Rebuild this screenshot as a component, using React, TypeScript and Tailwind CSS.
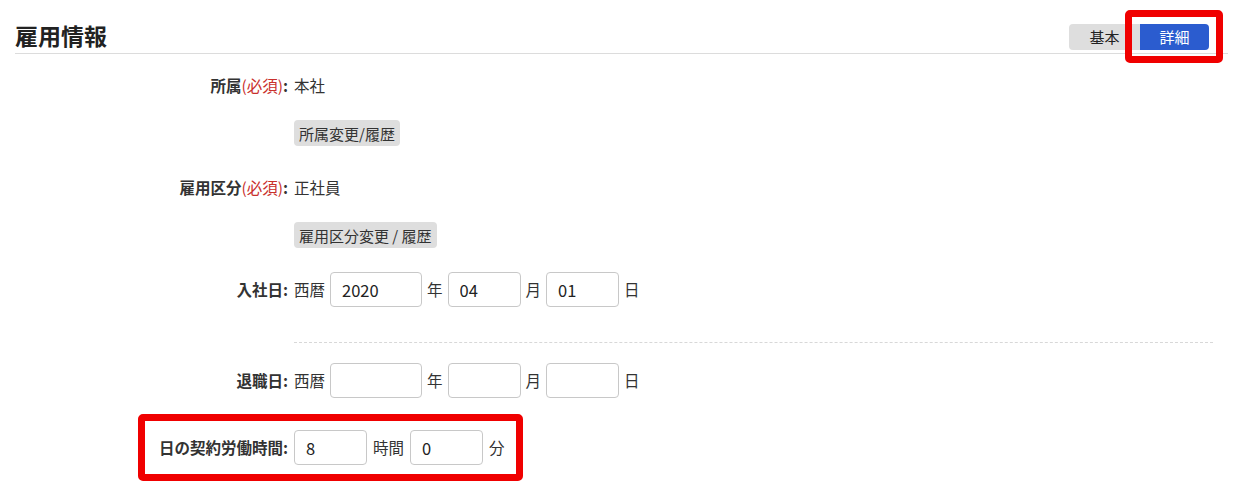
import React from "react";

const FONT = { fontFamily: '"Noto Sans CJK JP", "Noto Sans", sans-serif' };

function Label({ text, required }: { text: string; required?: boolean }) {
  return (
    <div className="w-[279px] shrink-0 text-right text-[15.5px] font-bold text-[#333] leading-none pr-[6px]">
      {text}
      {required && <span className="font-normal text-[#c9302c]">(必須)</span>}:
    </div>
  );
}

function Box({ value, w }: { value: string; w: string }) {
  return (
    <input
      readOnly
      value={value}
      className={`${w} h-[35px] border border-[#c8c8c8] rounded-[4px] pl-[11px] text-[16.5px] text-[#222] bg-white outline-none`}
      style={FONT}
    />
  );
}

function Unit({ t }: { t: string }) {
  return <span className="text-[15.5px] text-[#333] leading-none">{t}</span>;
}

export default function App() {
  return (
    <div className="w-[1240px] h-[486px] bg-white pl-[15px] pr-[12px] text-[#333]" style={FONT}>
      {/* header */}
      <div className="h-[54px] border-b border-[#dcdcdc] pt-[20px] flex items-center justify-between">
        <h1 className="text-[23px] font-bold leading-none text-[#222] -mt-[3px]">雇用情報</h1>
        <div className="flex mr-[19px] text-[15px] leading-none">
          <div className="w-[71px] h-[26px] bg-[#dedede] rounded-l-[4px] flex items-center justify-center text-[#222]">
            基本
          </div>
          <div className="relative w-[69px] h-[26px] bg-[#2b5ccf] rounded-r-[4px] flex items-center justify-center text-white">
            詳細
            <div className="absolute -left-[15px] -right-[14px] -top-[14px] -bottom-[13px] border-[7px] border-[#f00000] rounded-[5px]" />
          </div>
        </div>
      </div>

      {/* row 1 */}
      <div className="mt-[19px] h-[26px] flex items-center">
        <Label text="所属" required />
        <span className="text-[15.5px] leading-none">本社</span>
      </div>
      <div className="mt-[21px] h-[26px] flex">
        <div className="w-[279px] shrink-0" />
        <div className="h-[26px] px-[5px] bg-[#dedede] rounded-[4px] flex items-center text-[15px] leading-none text-[#333]">
          所属変更/履歴
        </div>
      </div>

      {/* row 2 */}
      <div className="mt-[29px] h-[26px] flex items-center">
        <Label text="雇用区分" required />
        <span className="text-[15.5px] leading-none">正社員</span>
      </div>
      <div className="mt-[21px] h-[26px] flex">
        <div className="w-[279px] shrink-0" />
        <div className="h-[26px] px-[5px] bg-[#dedede] rounded-[4px] flex items-center text-[15px] leading-none text-[#333]">
          雇用区分変更 / 履歴
        </div>
      </div>

      {/* row 3 */}
      <div className="mt-[24px] h-[35px] flex items-center">
        <Label text="入社日" />
        <div className="flex items-center gap-[5px]">
          <Unit t="西暦" />
          <Box value="2020" w="w-[92px]" />
          <Unit t="年" />
          <Box value="04" w="w-[73px]" />
          <Unit t="月" />
          <Box value="01" w="w-[73px]" />
          <Unit t="日" />
        </div>
      </div>

      <div className="mt-[35px] ml-[279px] mr-[15px] border-t border-dashed border-[#d8d8d8]" />

      {/* row 4 */}
      <div className="mt-[20px] h-[35px] flex items-center">
        <Label text="退職日" />
        <div className="flex items-center gap-[5px]">
          <Unit t="西暦" />
          <Box value="" w="w-[92px]" />
          <Unit t="年" />
          <Box value="" w="w-[73px]" />
          <Unit t="月" />
          <Box value="" w="w-[73px]" />
          <Unit t="日" />
        </div>
      </div>

      {/* row 5 */}
      <div className="relative mt-[32px] h-[35px] flex items-center">
        <Label text="日の契約労働時間" />
        <div className="flex items-center gap-[6px]">
          <Box value="8" w="w-[73px]" />
          <Unit t="時間" />
          <Box value="0" w="w-[73px]" />
          <Unit t="分" />
        </div>
        <div className="absolute left-[123px] top-[-16px] w-[385px] h-[67px] border-[7px] border-[#f00000] rounded-[5px]" />
      </div>
    </div>
  );
}
